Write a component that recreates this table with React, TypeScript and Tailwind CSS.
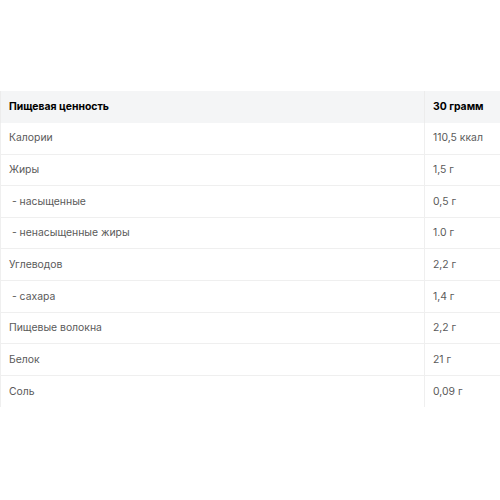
const rows: [string, string][] = [
  ["Калории", "110,5 ккал"],
  ["Жиры", "1,5 г"],
  ["\u00a0- насыщенные", "0,5 г"],
  ["\u00a0- ненасыщенные жиры", "1.0 г"],
  ["Углеводов", "2,2 г"],
  ["\u00a0- сахара", "1,4 г"],
  ["Пищевые волокна", "2,2 г"],
  ["Белок", "21 г"],
  ["Соль", "0,09 г"],
];

export default function App() {
  return (
    <div className="w-[500px] h-[500px] bg-white pt-[91px] font-['Inter','Liberation_Sans',sans-serif] text-[10.4px]">
      <table className="w-full border-collapse table-fixed">
        <colgroup>
          <col className="w-[424px]" />
          <col className="w-[76px]" />
        </colgroup>
        <thead>
          <tr className="bg-[#f4f5f6] h-[31.6px]">
            <th className="text-left font-bold text-black px-2 border-l border-[#ececec] whitespace-nowrap">Пищевая ценность</th>
            <th className="text-left font-bold text-black px-2 border-l border-[#ececec] whitespace-nowrap">30 грамм</th>
          </tr>
        </thead>
        <tbody>
          {rows.map(([name, value], i) => (
            <tr key={i} className={`h-[31.6px] ${i < rows.length - 1 ? "border-b border-[#efefef]" : ""}`}>
              <td className="px-2 text-[#5a5a5a] border-l border-[#efefef] whitespace-pre">{name}</td>
              <td className="px-2 text-[#5a5a5a] border-l border-[#efefef] whitespace-nowrap">{value}</td>
            </tr>
          ))}
        </tbody>
      </table>
    </div>
  );
}
